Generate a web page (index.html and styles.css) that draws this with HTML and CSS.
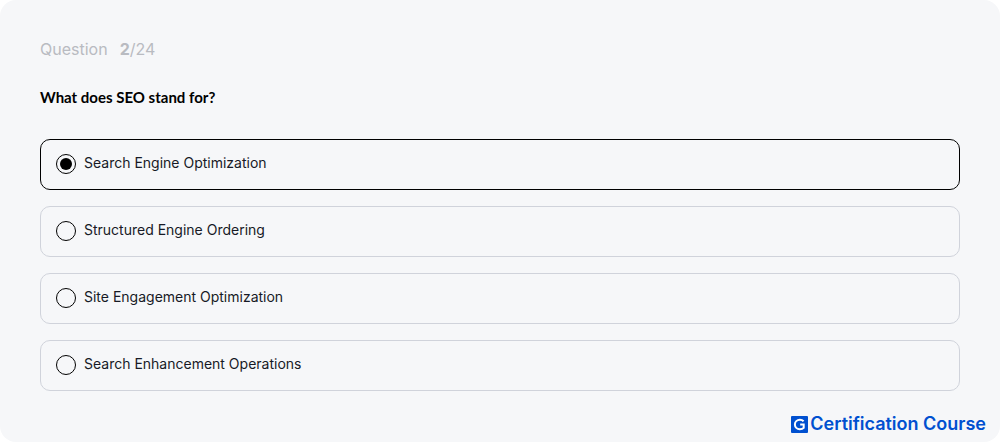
FILE: index.html
```html
<!DOCTYPE html>
<html lang="en">
<head>
<meta charset="utf-8">
<meta name="viewport" content="width=device-width, initial-scale=1">
<title>Certification Course</title>
<link rel="stylesheet" href="styles.css">
</head>
<body>
<main class="quiz">
  <p class="progress"><span>Question</span><span><strong>2</strong>/24</span></p>
  <form class="form">
    <fieldset class="options">
      <legend class="question">What does SEO stand for?</legend>
      <label class="option"><input class="radio" type="radio" name="answer" checked><span class="text">Search Engine Optimization</span></label>
      <label class="option"><input class="radio" type="radio" name="answer"><span class="text">Structured Engine Ordering</span></label>
      <label class="option"><input class="radio" type="radio" name="answer"><span class="text">Site Engagement Optimization</span></label>
      <label class="option"><input class="radio" type="radio" name="answer"><span class="text">Search Enhancement Operations</span></label>
    </fieldset>
  </form>
  <footer class="brand">
    <svg class="logo" viewBox="0 0 17 17" aria-hidden="true">
      <rect width="17" height="17" rx="1" fill="#0050d0"/>
      <path d="M12.6 5.2C11.6 4.2 10.3 3.8 8.9 3.8C6 3.8 3.9 5.8 3.9 8.5S6 13.2 8.8 13.2C10.4 13.2 11.9 12.7 12.7 11.9V8.6H9.2" fill="none" stroke="#fff" stroke-width="2"/>
    </svg>
    <span>Certification Course</span>
  </footer>
</main>
</body>
</html>
```
FILE: styles.css
```css
* {
  box-sizing: border-box;
}

body {
  margin: 0;
  background: #fff;
  color: #171a26;
  font-family: Inter, "Liberation Sans", sans-serif;
}

.quiz {
  display: flex;
  flex-direction: column;
  min-height: 100vh;
  padding: 39px 40px 8px;
  border-radius: 16px;
  background: #f6f7f9;
}

.progress {
  display: flex;
  gap: 12px;
  margin: 0 0 28px;
  color: #b9bbc1;
  font-size: 16px;
  line-height: 20px;
}

.options {
  display: flex;
  flex-direction: column;
  gap: 16px;
  min-width: 0;
  margin: 0;
  padding: 0;
  border: 0;
}

.question {
  margin-bottom: 32px;
  padding: 0;
  color: #000;
  font-family: Lato, sans-serif;
  font-size: 15px;
  font-weight: 700;
  line-height: 20px;
}

.option {
  display: flex;
  align-items: center;
  gap: 8px;
  min-height: 51px;
  padding: 0 15px 2px;
  border: 1px solid #d0d3db;
  border-radius: 10px;
  cursor: pointer;
}

.option:has(.radio:checked) {
  border-color: #000;
}

.radio {
  appearance: none;
  flex: none;
  width: 20px;
  height: 20px;
  margin: 0;
  border: 1px solid #000;
  border-radius: 50%;
}

.radio:checked {
  padding: 3px;
  background: #000 content-box;
}

.text {
  padding-bottom: 2px;
  font-size: 14px;
  line-height: 20px;
}

.brand {
  display: flex;
  align-items: center;
  align-self: flex-end;
  gap: 2px;
  margin: auto -26px 0 0;
  color: #0050d0;
  font-size: 18px;
  font-weight: 600;
  line-height: 20px;
}

.logo {
  width: 17px;
  height: 17px;
}
```
